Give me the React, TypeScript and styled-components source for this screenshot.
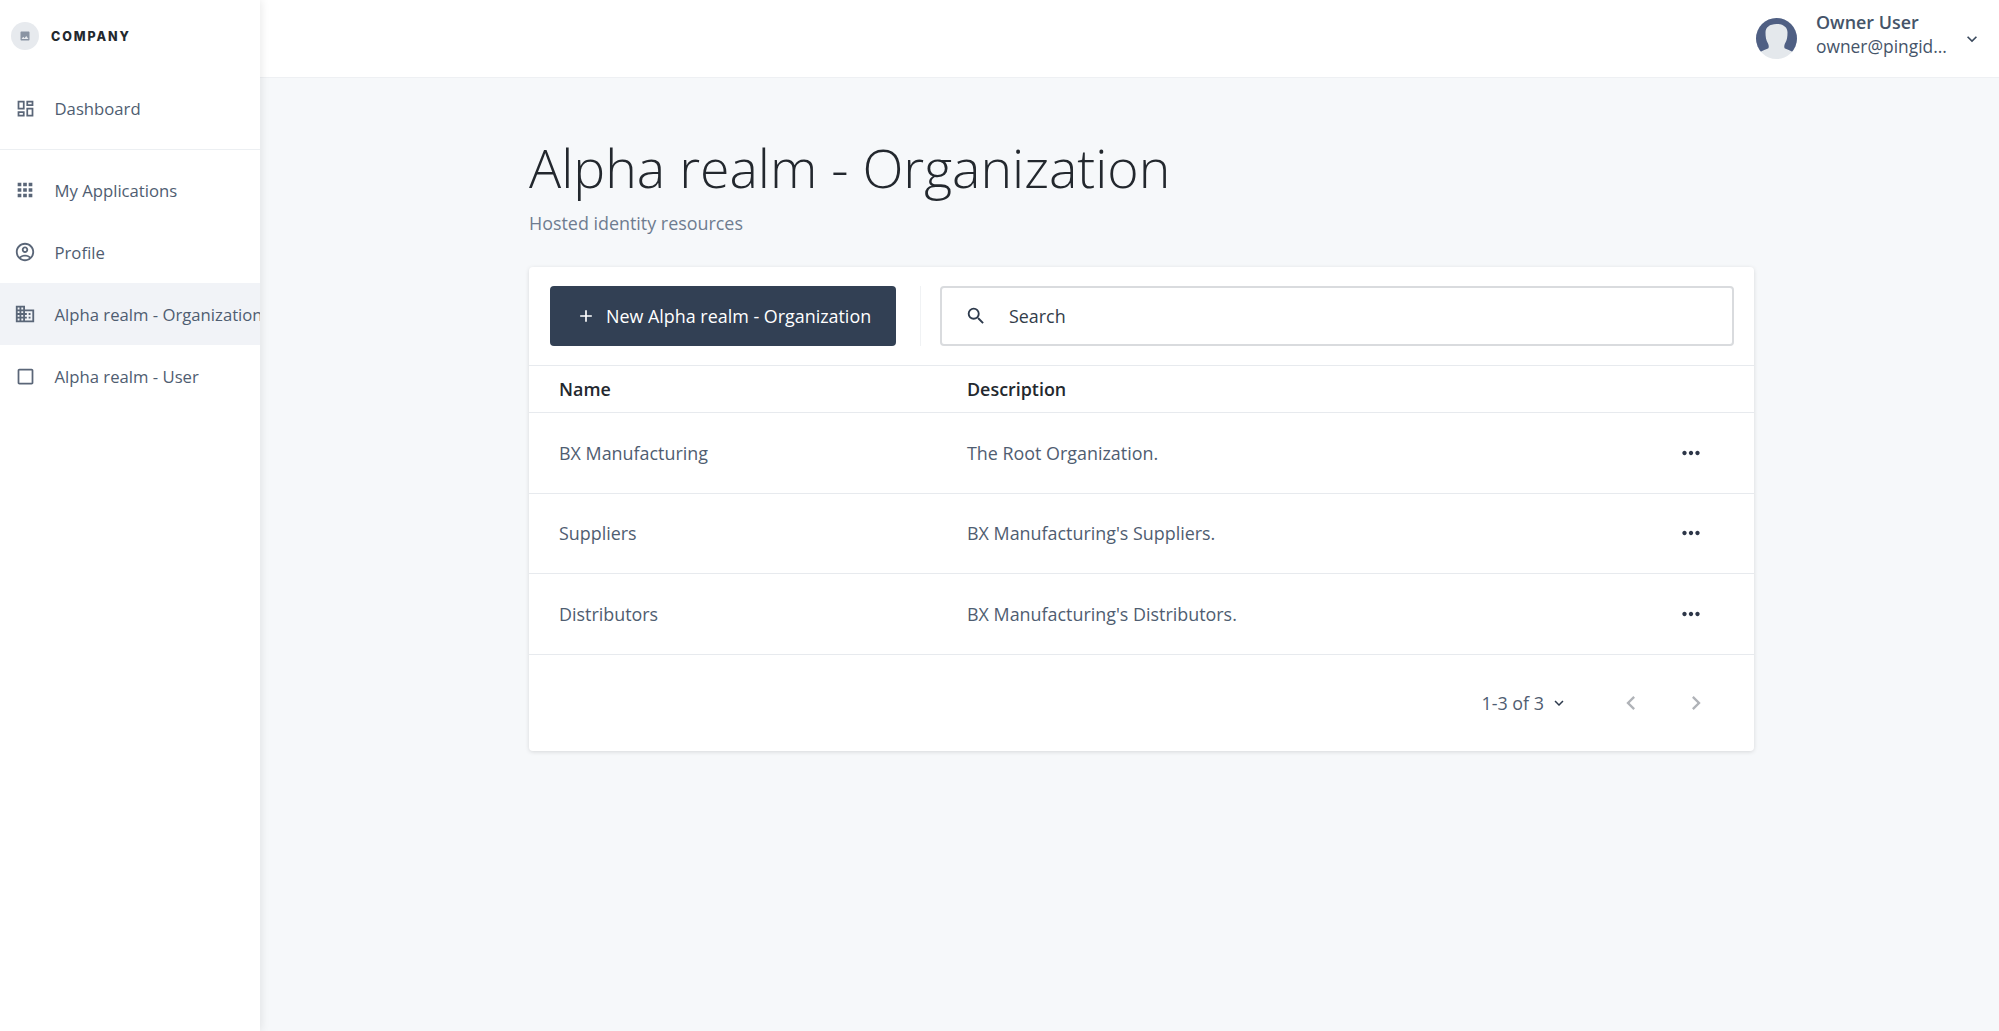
import styled, { createGlobalStyle } from 'styled-components';
import {
  MdAdd,
  MdApps,
  MdBusiness,
  MdCheckBoxOutlineBlank,
  MdChevronLeft,
  MdChevronRight,
  MdExpandMore,
  MdImage,
  MdMoreHoriz,
  MdOutlineAccountCircle,
  MdOutlineDashboard,
  MdSearch,
} from 'react-icons/md';

const organizations = [
  { name: 'BX Manufacturing', description: 'The Root Organization.' },
  { name: 'Suppliers', description: "BX Manufacturing's Suppliers." },
  { name: 'Distributors', description: "BX Manufacturing's Distributors." },
];

export default function App() {
  return (
    <>
      <GlobalStyle />
      <Page>
        <Sidebar>
          <Brand>
            <LogoCircle>
              <MdImage size={12} />
            </LogoCircle>
            <BrandName>COMPANY</BrandName>
          </Brand>
          <NavItem>
            <NavIcon>
              <MdOutlineDashboard size={21} />
            </NavIcon>
            <NavLabel>Dashboard</NavLabel>
          </NavItem>
          <NavDivider />
          <NavItem>
            <NavIcon>
              <MdApps size={22} />
            </NavIcon>
            <NavLabel>My Applications</NavLabel>
          </NavItem>
          <NavItem>
            <NavIcon>
              <MdOutlineAccountCircle size={22} />
            </NavIcon>
            <NavLabel>Profile</NavLabel>
          </NavItem>
          <NavItem $active>
            <NavIcon>
              <MdBusiness size={22} />
            </NavIcon>
            <NavLabel>Alpha realm - Organization</NavLabel>
          </NavItem>
          <NavItem>
            <NavIcon>
              <MdCheckBoxOutlineBlank size={21} />
            </NavIcon>
            <NavLabel>Alpha realm - User</NavLabel>
          </NavItem>
        </Sidebar>
        <Main>
          <TopBar>
            <UserMenu>
              <svg width="41" height="41" viewBox="0 0 41 41">
                <defs>
                  <clipPath id="avatar-clip">
                    <circle cx="20.5" cy="20.5" r="20.5" />
                  </clipPath>
                </defs>
                <g clipPath="url(#avatar-clip)">
                  <rect width="41" height="41" fill="#e4e8ec" />
                  <path
                    d="M0 0h41v37c-3-3-8-5-12-6.500-1-.5-1-3 0-5 2-3 2.500-7 2.500-11 0-5-4-8.500-11-8.500S9.500 9.500 9.500 14.500c0 4 .5 8 2.500 11 1 2 1 4.500 0 5-4 1.500-9 3.500-12 6.500z"
                    fill="#4f5f83"
                  />
                </g>
              </svg>
              <UserText>
                <UserName>Owner User</UserName>
                <UserEmail>owner@pingid...</UserEmail>
              </UserText>
              <MdExpandMore size={20} color="#3b4a5e" />
            </UserMenu>
          </TopBar>
          <Content>
            <Title>Alpha realm - Organization</Title>
            <Subtitle>Hosted identity resources</Subtitle>
            <Card>
              <Toolbar>
                <NewButton>
                  <MdAdd size={20} />
                  New Alpha realm - Organization
                </NewButton>
                <ToolbarDivider />
                <SearchBox>
                  <MdSearch size={22} color="#2d3a4c" />
                  <SearchInput placeholder="Search" />
                </SearchBox>
              </Toolbar>
              <HeadRow>
                <NameCell>Name</NameCell>
                <DescriptionCell>Description</DescriptionCell>
              </HeadRow>
              {organizations.map((org) => (
                <BodyRow key={org.name}>
                  <NameCell>{org.name}</NameCell>
                  <DescriptionCell>{org.description}</DescriptionCell>
                  <MoreButton>
                    <MdMoreHoriz size={26} />
                  </MoreButton>
                </BodyRow>
              ))}
              <Pagination>
                <PageCount>
                  1-3 of 3
                  <MdExpandMore size={18} color="#2d3a4c" />
                </PageCount>
                <PageArrow>
                  <MdChevronLeft size={28} />
                </PageArrow>
                <PageArrow>
                  <MdChevronRight size={28} />
                </PageArrow>
              </Pagination>
            </Card>
          </Content>
        </Main>
      </Page>
    </>
  );
}

const GlobalStyle = createGlobalStyle`
  html, body {
    margin: 0;
    padding: 0;
    height: 100%;
    background-color: #f6f8fa;
    font-family: 'Open Sans', 'Noto Sans', sans-serif;
    color: #455469;
  }

  #root {
    height: 100%;
  }

  * {
    box-sizing: border-box;
  }
`;

const Page = styled.div`
  display: flex;
  width: 100%;
  height: 1031px;
  overflow: hidden;
`;

const Sidebar = styled.nav`
  width: 260px;
  flex-shrink: 0;
  background-color: #ffffff;
  box-shadow: 2px 0 8px rgba(0, 0, 0, 0.08);
  position: relative;
  z-index: 2;
`;

const Brand = styled.div`
  height: 72px;
  margin-bottom: 5px;
  display: flex;
  align-items: center;
  gap: 12px;
  padding-left: 11px;
`;

const LogoCircle = styled.div`
  width: 28px;
  height: 28px;
  border-radius: 50%;
  background-color: #e7eaee;
  color: #8a94a3;
  display: flex;
  align-items: center;
  justify-content: center;
`;

const BrandName = styled.span`
  font-family: 'Inter', sans-serif;
  font-size: 12.5px;
  font-weight: 800;
  letter-spacing: 1.9px;
  color: #23282e;
`;

const NavItem = styled.div<{ $active?: boolean }>`
  height: 62px;
  display: flex;
  align-items: center;
  gap: 18px;
  padding-left: 13.500px;
  white-space: nowrap;
  overflow: hidden;
  background-color: ${(p) => (p.$active ? '#f1f3f7' : 'transparent')};
`;

const NavIcon = styled.div`
  width: 23px;
  flex-shrink: 0;
  display: flex;
  justify-content: center;
  color: #5a6678;
`;

const NavLabel = styled.span`
  font-size: 16.7px;
  color: #4f5d71;
`;

const NavDivider = styled.div`
  height: 1px;
  margin: 10px 0 9px;
  background-color: #eceff2;
`;

const Main = styled.div`
  flex: 1;
  min-width: 0;
  display: flex;
  flex-direction: column;
`;

const TopBar = styled.header`
  height: 78px;
  flex-shrink: 0;
  background-color: #ffffff;
  border-bottom: 1px solid #eef0f3;
  display: flex;
  justify-content: flex-end;
  align-items: center;
  padding-right: 17px;
`;

const UserMenu = styled.div`
  display: flex;
  align-items: center;
  gap: 19px;
`;

const UserText = styled.div`
  width: 127px;
  margin-bottom: 9px;
  display: flex;
  flex-direction: column;
  gap: 0;
  line-height: 24px;
  white-space: nowrap;
`;

const UserName = styled.strong`
  font-size: 17.9px;
  font-weight: 600;
  color: #455469;
`;

const UserEmail = styled.span`
  font-size: 17.4px;
  color: #455469;
`;

const Content = styled.main`
  padding: 0 0 0 269px;
`;

const Title = styled.h1`
  margin: 58px 0 0;
  font-size: 53.6px;
  font-weight: 300;
  line-height: 64px;
  color: #23282e;
  white-space: nowrap;
`;

const Subtitle = styled.p`
  margin: 11px 0 0;
  font-size: 17.9px;
  line-height: 24px;
  color: #6e7c90;
`;

const Card = styled.section`
  width: 1225px;
  margin-top: 32px;
  background-color: #ffffff;
  border-radius: 4px;
  box-shadow: 0 1px 4px rgba(0, 0, 0, 0.13);
`;

const Toolbar = styled.div`
  height: 99px;
  display: flex;
  align-items: center;
  padding: 0 20px 0 21px;
  border-bottom: 1px solid #e7eaee;
`;

const NewButton = styled.button`
  width: 346px;
  height: 60px;
  flex-shrink: 0;
  border: 0;
  border-radius: 4px;
  background-color: #324054;
  color: #ffffff;
  font-family: inherit;
  font-size: 17.9px;
  display: flex;
  align-items: center;
  gap: 10px;
  padding: 0 0 0 26px;
`;

const ToolbarDivider = styled.div`
  width: 1px;
  height: 60px;
  margin: 0 19px 0 24px;
  background-color: #f0f2f4;
`;

const SearchBox = styled.div`
  flex: 1;
  height: 60px;
  border: 2px solid #d9dbde;
  border-radius: 4px;
  display: flex;
  align-items: center;
  gap: 20px;
  padding-left: 23px;
`;

const SearchInput = styled.input`
  flex: 1;
  border: 0;
  outline: 0;
  background: transparent;
  font-family: inherit;
  font-size: 17.9px;
  color: #23282e;

  &::placeholder {
    color: #323c49;
    opacity: 1;
  }
`;

const HeadRow = styled.div`
  height: 47px;
  display: flex;
  align-items: center;
  padding-left: 30px;
  border-bottom: 1px solid #e7eaee;
  font-size: 17.9px;
  font-weight: 600;
  color: #23282e;
`;

const BodyRow = styled.div`
  height: 80.500px;
  display: flex;
  align-items: center;
  padding-left: 30px;
  border-bottom: 1px solid #e7eaee;
  font-size: 17.9px;
  color: #4f5d71;
`;

const NameCell = styled.div`
  width: 408px;
  flex-shrink: 0;
`;

const DescriptionCell = styled.div`
  flex: 1;
`;

const MoreButton = styled.div`
  display: flex;
  color: #2d3648;
  margin-right: 50px;
`;

const Pagination = styled.div`
  height: 96px;
  display: flex;
  align-items: center;
  justify-content: flex-end;
  padding-right: 44px;
  gap: 37px;
`;

const PageCount = styled.div`
  display: flex;
  align-items: center;
  gap: 6px;
  font-size: 17.9px;
  color: #4f5d71;
  margin-right: 12px;
`;

const PageArrow = styled.div`
  display: flex;
  color: #b0b3b8;
`;
